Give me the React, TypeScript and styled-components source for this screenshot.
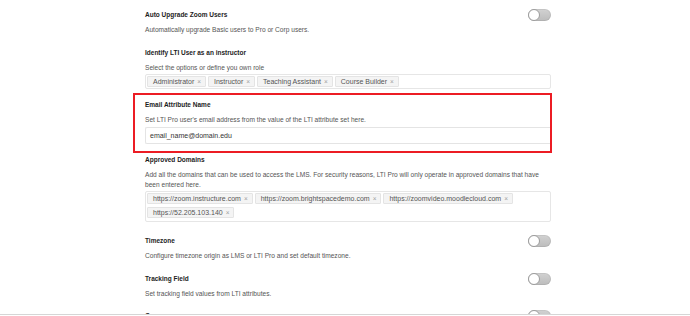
import React from 'react'
import styled, { createGlobalStyle } from 'styled-components'

const GlobalStyle = createGlobalStyle`
  html, body {
    margin: 0;
    padding: 0;
    background: #ffffff;
  }
  body {
    font-family: "Liberation Sans", Arial, Helvetica, sans-serif;
    -webkit-font-smoothing: antialiased;
  }
`

const Page = styled.div`
  height: 316px;
  overflow: hidden;
`

const Viewport = styled.div`
  height: 314px;
  overflow: hidden;
  border-bottom: 1px solid #d6d6d6;
`

const Content = styled.div`
  width: 406px;
  margin-left: 145px;
  padding-top: 9px;
`

const Section = styled.section<{ $top?: number }>`
  margin-top: ${({ $top }) => ($top ?? 12)}px;
`

const Highlight = styled.section`
  margin: 4px -1px 0 -12px;
  padding: 4px 0 7px 10px;
  border: 2px solid #ec1c24;
`

const Header = styled.div`
  display: flex;
  align-items: center;
  justify-content: space-between;
  height: 12px;
`

const Title = styled.h3`
  margin: 0;
  font-size: 6.5px;
  line-height: 12px;
  font-weight: 700;
  color: #1d1d1d;
`

const Desc = styled.p`
  margin: 4px 0 0;
  font-size: 6.6px;
  line-height: 10px;
  color: #555555;
`

const TagBox = styled.div<{ $bottom?: number }>`
  display: flex;
  flex-wrap: wrap;
  gap: 3px 2px;
  margin-top: 1px;
  padding: 1px 1px ${({ $bottom }) => ($bottom ?? 1)}px;
  border: 1px solid #e6e6e6;
  border-radius: 2px;
  background: #fff;
`

const Tag = styled.span`
  display: inline-flex;
  align-items: center;
  height: 11px;
  padding: 0 4px 0 5px;
  background: #f4f4f4;
  border: 1px solid #e4e4e4;
  border-radius: 1px;
  box-sizing: border-box;
  font-size: 7px;
  color: #555555;
  white-space: nowrap;
`

const Close = styled.span`
  margin-left: 3px;
  font-size: 6.5px;
  color: #a0a0a0;
`

const Input = styled.div`
  margin-top: 2px;
  height: 17px;
  padding: 0 4px;
  display: flex;
  align-items: center;
  box-sizing: border-box;
  border: 1px solid #e4e4e4;
  border-right: none;
  border-radius: 2px 0 0 2px;
  font-size: 7px;
  color: #333333;
`

const Toggle = styled.span`
  position: relative;
  flex: none;
  width: 23px;
  height: 12px;
  border-radius: 6px;
  background: linear-gradient(#d2d2d2, #bcbcbc);
  box-shadow: inset 0 0 0 1px rgba(0, 0, 0, 0.06);

  &::after {
    content: '';
    position: absolute;
    left: 0;
    top: 0;
    width: 12px;
    height: 12px;
    box-sizing: border-box;
    border-radius: 50%;
    background: #ffffff;
    border: 1px solid #9c9c9c;
  }
`

const roles = ['Administrator', 'Instructor', 'Teaching Assistant', 'Course Builder']
const domains = [
  'https://zoom.instructure.com',
  'https://zoom.brightspacedemo.com',
  'https://zoomvideo.moodlecloud.com',
  'https://52.205.103.140',
]

const Tags = ({ items, bottom }: { items: string[]; bottom?: number }) => (
  <TagBox $bottom={bottom}>
    {items.map((item) => (
      <Tag key={item}>
        {item}
        <Close>×</Close>
      </Tag>
    ))}
  </TagBox>
)

const App = () => (
  <Page>
    <GlobalStyle />
    <Viewport>
      <Content>
        <Section $top={0}>
          <Header>
            <Title>Auto Upgrade Zoom Users</Title>
            <Toggle />
          </Header>
          <Desc>Automatically upgrade Basic users to Pro or Corp users.</Desc>
        </Section>

        <Section>
          <Header>
            <Title>Identify LTI User as an instructor</Title>
          </Header>
          <Desc>Select the options or define you own role</Desc>
          <Tags items={roles} />
        </Section>

        <Highlight>
          <Header>
            <Title>Email Attribute Name</Title>
          </Header>
          <Desc>Set LTI Pro user's email address from the value of the LTI attribute set here.</Desc>
          <Input>email_name@domain.edu</Input>
        </Highlight>

        <Section $top={1}>
          <Header>
            <Title>Approved Domains</Title>
          </Header>
          <Desc>
            Add all the domains that can be used to access the LMS. For security reasons, LTI Pro will only operate in
            approved domains that have been entered here.
          </Desc>
          <Tags items={domains} bottom={3} />
        </Section>

        <Section $top={13}>
          <Header>
            <Title>Timezone</Title>
            <Toggle />
          </Header>
          <Desc>Configure timezone origin as LMS or LTI Pro and set default timezone.</Desc>
        </Section>

        <Section>
          <Header>
            <Title>Tracking Field</Title>
            <Toggle />
          </Header>
          <Desc>Set tracking field values from LTI attributes.</Desc>
        </Section>

        <Section $top={11}>
          <Header>
            <Title>Group</Title>
            <Toggle />
          </Header>
        </Section>
      </Content>
    </Viewport>
  </Page>
)

export default App
